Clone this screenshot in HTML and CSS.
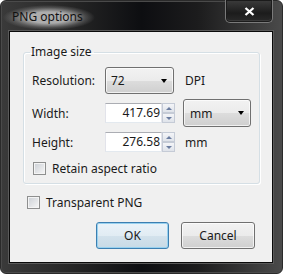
FILE: index.html
```html
<!DOCTYPE html>
<html>
	<head>
		<meta charset="UTF-8">
		<title>PNG options</title>
		<link rel="stylesheet" href="styles.css">
	</head>
	<body>
		<div class="window">
			<div class="titlebar">
				<span class="title">PNG options</span>
				<div class="close">
					<svg width="11" height="9" viewBox="0 0 11 9"><path d="M1.5 1 L9.5 8 M9.5 1 L1.5 8" stroke="#fff" stroke-width="2.3" fill="none"/></svg>
				</div>
			</div>
			<div class="client">
				<fieldset class="group">
					<legend>Image size</legend>
					<div class="grid">
						<span class="lbl">Resolution:</span>
						<div class="combo res"><span>72</span><i class="arrow"></i></div>
						<span class="unit">DPI</span>

						<span class="lbl">Width:</span>
						<div class="spin">
							<span class="field">417.69</span>
							<div class="spinbtns"><b class="up"></b><b class="down"></b></div>
						</div>
						<div class="combo unitbox"><span>mm</span><i class="arrow"></i></div>

						<span class="lbl">Height:</span>
						<div class="spin">
							<span class="field">276.58</span>
							<div class="spinbtns"><b class="up"></b><b class="down"></b></div>
						</div>
						<span class="unit">mm</span>
					</div>
					<div class="check inner"><i class="box"></i><span>Retain aspect ratio</span></div>
				</fieldset>
				<div class="check outer"><i class="box"></i><span>Transparent PNG</span></div>
				<div class="buttons">
					<div class="btn ok">OK</div>
					<div class="btn">Cancel</div>
				</div>
			</div>
		</div>
	</body>
</html>
```

FILE: styles.css
```css
*{
	padding: 0;
	margin: 0;
	box-sizing: border-box;
}
body{
	background: #fff;
	font-family: "Noto Sans", "Liberation Sans", sans-serif;
	font-size: 12px;
	color: #1a1a1a;
}
.window{
	width: 283px;
	height: 274px;
	border-radius: 6px;
	border: 1px solid #2a2a2a;
	box-shadow: inset 0 0 0 1px #4a4a4a;
	background: linear-gradient(to right, #3a3a3a 0%, #262626 25%, #0d0e11 50%, #1c1c1d 70%, #3b3b3b 90%, #4a4a4a 100%);
	display: flex;
	flex-direction: column;
	padding: 0 9px 10px 8px;
}
.titlebar{
	height: 30px;
	display: flex;
	align-items: flex-start;
}
.title{
	margin: 4px 0 0 -6px;
	padding: 4px 12px 5px 9px;
	line-height: 16px;
	color: #111;
	background: radial-gradient(ellipse closest-side, rgba(205,205,205,.8) 45%, rgba(160,160,160,.3) 80%, rgba(120,120,120,0) 100%);
}
.close{
	margin: -1px 0 0 auto;
	width: 48px;
	height: 23px;
	border: 1px solid #7a7a7a;
	border-top: none;
	border-radius: 0 0 5px 5px;
	box-shadow: inset 0 0 0 1px #1b1b1b, inset 0 -1px 0 1px #3a3a3a;
	background: linear-gradient(#3c3c3c, #1c1c1c 60%, #2a2a2a);
	display: flex;
	align-items: center;
	justify-content: center;
}
.client{
	flex: 1;
	background: #f0f0f0;
	border: 1px solid #0a0a0a;
	box-shadow: 0 0 0 1px #5a5a5a;
	padding: 12px 14px 0 13px;
}
.group{
	border: 1px solid #d5dfe5;
	border-radius: 3px;
	box-shadow: inset 1px 1px 0 #fff, 1px 1px 0 #fff;
	padding: 7px 8px 7px 8px;
}
.group legend{
	margin-left: -2px;
	padding: 0 2px 0 1px;
	line-height: 16px;
}
.grid{
	display: grid;
	grid-template-columns: 73px 78px 68px;
	grid-template-rows: 27px 28px 20px;
	row-gap: 5px;
	align-items: center;
}
.unit{
	padding-left: 2px;
}
.combo{
	height: 100%;
	border: 1px solid #707070;
	border-radius: 3px;
	background: linear-gradient(#f2f2f2, #ebebeb 50%, #dddddd 50%, #cfcfcf);
	box-shadow: inset 0 0 0 1px rgba(255,255,255,.7);
	display: flex;
	align-items: center;
	justify-content: space-between;
	padding: 0 6px 0 5px;
}
.res{
	width: 69px;
}
.unitbox span{
	padding-left: 1px;
}
.arrow{
	width: 0;
	height: 0;
	border-left: 3.5px solid transparent;
	border-right: 3.5px solid transparent;
	border-top: 4px solid #000;
}
.spin{
	display: flex;
	height: 20px;
	width: 70px;
}
.field{
	width: 57px;
	background: #fff;
	border: 1px solid #e2e3ea;
	border-top-color: #abadb3;
	border-bottom-color: #e3e9ef;
	text-align: right;
	padding-right: 1px;
	line-height: 18px;
}
.spinbtns{
	width: 13px;
	display: flex;
	flex-direction: column;
}
.spinbtns b{
	flex: 1;
	border: 1px solid #c5cbd6;
	background: linear-gradient(#f4f5f8, #dfe3ea);
	display: flex;
	align-items: center;
	justify-content: center;
}
.spinbtns b::after{
	content: "";
	border-left: 3px solid transparent;
	border-right: 3px solid transparent;
}
.spinbtns .up::after{
	border-bottom: 3px solid #6b7da0;
}
.spinbtns .down::after{
	border-top: 3px solid #6b7da0;
}
.check{
	display: flex;
	align-items: center;
	line-height: 15px;
}
.check .box{
	width: 13px;
	height: 13px;
	border: 1px solid #8e8f8f;
	background: linear-gradient(135deg, #cbcfd5, #f7f7f7);
	box-shadow: inset 0 0 0 1px #f4f4f4;
	margin-right: 6px;
}
.check.inner{
	margin: 9px 0 0 1px;
}
.check.outer{
	margin: 11px 0 0 4px;
}
.buttons{
	display: flex;
	justify-content: flex-end;
	gap: 12px;
	margin: 12px 3px 0 0;
}
.btn{
	width: 74px;
	height: 27px;
	border: 1px solid #707070;
	border-radius: 3px;
	background: linear-gradient(#f2f2f2, #ebebeb 50%, #dddddd 50%, #cfcfcf);
	box-shadow: inset 0 0 0 1px rgba(255,255,255,.7);
	display: flex;
	align-items: center;
	justify-content: center;
}
.btn.ok{
	width: 73px;
	border-color: #3c7fb1;
	background: linear-gradient(#eaf3f9, #e1ecf3 50%, #d3e2ec 50%, #c8dae6);
	box-shadow: inset 0 0 0 1px #98d1ef;
}
```
